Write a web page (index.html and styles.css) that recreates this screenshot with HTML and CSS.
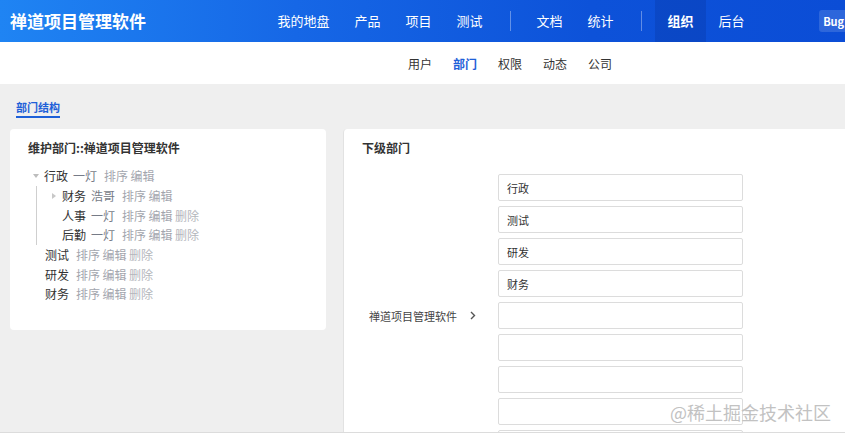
FILE: index.html
```html
<!DOCTYPE html>
<html lang="zh-CN">
<head>
<meta charset="utf-8">
<title>部门结构</title>
<link rel="stylesheet" href="styles.css">
</head>
<body>
<header class="topbar">
  <div class="brand">禅道项目管理软件</div>
  <nav class="mainnav">
    <a class="nav-item">我的地盘</a>
    <a class="nav-item">产品</a>
    <a class="nav-item">项目</a>
    <a class="nav-item">测试</a>
    <span class="nav-sep"></span>
    <a class="nav-item">文档</a>
    <a class="nav-item">统计</a>
    <span class="nav-sep"></span>
    <a class="nav-item active">组织</a>
    <a class="nav-item">后台</a>
  </nav>
  <span class="bug-badge">Bug</span>
</header>

<nav class="subnav">
  <a class="sub-item">用户</a>
  <a class="sub-item active">部门</a>
  <a class="sub-item">权限</a>
  <a class="sub-item">动态</a>
  <a class="sub-item">公司</a>
</nav>

<main class="content">
  <div class="tabs"><span class="tab active">部门结构</span></div>
  <div class="panels">
    <section class="panel panel-tree">
      <h2 class="panel-title">维护部门::禅道项目管理软件</h2>
      <ul class="tree">
        <li class="node">
          <div class="row"><span class="caret caret-down"></span><span class="name">行政</span><span class="manager">一灯</span><span class="actions"><a>排序</a><a>编辑</a></span></div>
          <ul class="children">
            <li class="node"><div class="row"><span class="caret caret-right"></span><span class="name">财务</span><span class="manager">浩哥</span><span class="actions"><a>排序</a><a>编辑</a></span></div></li>
            <li class="node"><div class="row"><span class="caret caret-leaf"></span><span class="name">人事</span><span class="manager">一灯</span><span class="actions"><a>排序</a><a>编辑</a><a class="del">删除</a></span></div></li>
            <li class="node"><div class="row"><span class="caret caret-leaf"></span><span class="name">后勤</span><span class="manager">一灯</span><span class="actions"><a>排序</a><a>编辑</a><a class="del">删除</a></span></div></li>
          </ul>
        </li>
        <li class="node"><div class="row"><span class="caret caret-none"></span><span class="name">测试</span><span class="actions"><a>排序</a><a>编辑</a><a class="del">删除</a></span></div></li>
        <li class="node"><div class="row"><span class="caret caret-none"></span><span class="name">研发</span><span class="actions"><a>排序</a><a>编辑</a><a class="del">删除</a></span></div></li>
        <li class="node"><div class="row"><span class="caret caret-none"></span><span class="name">财务</span><span class="actions"><a>排序</a><a>编辑</a><a class="del">删除</a></span></div></li>
      </ul>
    </section>

    <section class="panel panel-children">
      <h2 class="panel-title">下级部门</h2>
      <div class="child-form">
        <div class="parent-label">禅道项目管理软件
          <svg class="chev" width="6" height="9" viewBox="0 0 6 9"><polyline points="1,1 4.5,4.5 1,8" fill="none" stroke="#555" stroke-width="1.4"/></svg>
        </div>
        <div class="inputs">
          <input class="dept-input" type="text" value="行政" readonly>
          <input class="dept-input" type="text" value="测试" readonly>
          <input class="dept-input" type="text" value="研发" readonly>
          <input class="dept-input" type="text" value="财务" readonly>
          <input class="dept-input" type="text" value="" readonly>
          <input class="dept-input" type="text" value="" readonly>
          <input class="dept-input" type="text" value="" readonly>
          <input class="dept-input" type="text" value="" readonly>
          <input class="dept-input" type="text" value="" readonly>
        </div>
      </div>
    </section>
  </div>
</main>

<div class="watermark">@稀土掘金技术社区</div>
</body>
</html>
```

FILE: styles.css
```css
html, body {
  margin: 0;
  padding: 0;
  overflow: hidden;
}
body {
  position: relative;
  width: 845px;
  height: 442px;
  background: #fff;
  font-family: "Noto Sans CJK SC", "Noto Sans", sans-serif;
  color: #333;
}
a { cursor: pointer; }
ul { list-style: none; margin: 0; padding: 0; }
h2 { margin: 0; }

/* top bar */
.topbar {
  display: flex;
  align-items: stretch;
  height: 42px;
  background: linear-gradient(90deg, #1f84f3 0%, #1667e6 35%, #0d52d9 70%, #0b4dd6 100%);
  color: #fff;
  overflow: hidden;
}
.brand {
  flex: 0 0 auto;
  width: 255px;
  padding-left: 10px;
  font-size: 17px;
  font-weight: bold;
  line-height: 42px;
}
.mainnav {
  display: flex;
  align-items: stretch;
  flex: 0 0 auto;
}
.nav-item {
  padding: 0 12.5px;
  font-size: 13px;
  line-height: 42px;
  color: #fff;
}
.nav-item.active {
  background: rgba(0, 20, 90, 0.14);
  font-weight: bold;
}
.nav-sep {
  align-self: center;
  width: 1px;
  height: 20px;
  margin: 0 13px 0 15px;
  background: rgba(255, 255, 255, 0.35);
}
.bug-badge {
  flex: 0 0 auto;
  align-self: center;
  margin-left: 62px;
  height: 22px;
  padding: 0 4px;
  border-radius: 3px;
  background: rgba(255, 255, 255, 0.14);
  font-size: 11px;
  font-weight: bold;
  line-height: 22px;
}

/* sub nav */
.subnav {
  display: flex;
  align-items: center;
  gap: 21px;
  height: 42px;
  padding-left: 408px;
  font-size: 12px;
}
.sub-item { color: #333; }
.sub-item.active { color: #1e60d8; font-weight: bold; }

/* content */
.content {
  height: 348px;
  background: #efefef;
  border-bottom: 1px solid #dcdcdc;
  overflow: hidden;
}
.tabs {
  padding: 16px 0 0 16px;
  display: flex;
}
.tab {
  font-size: 11px;
  line-height: 14px;
  font-weight: bold;
  padding-bottom: 2px;
  color: #1e60d8;
  border-bottom: 2px solid #1e60d8;
}
.panels {
  display: flex;
  align-items: flex-start;
  gap: 17px;
  margin-top: 11px;
  padding-left: 10px;
}
.panel {
  background: #fff;
  border-radius: 4px;
  box-sizing: border-box;
}
.panel-title {
  font-size: 12px;
  line-height: 14px;
  font-weight: bold;
  color: #333;
}
.panel-tree {
  width: 316px;
  padding: 12px 18px 26px;
}
.panel-children {
  flex: 1;
  padding: 12px 18px 20px;
  border-left: 1px solid #e2e2e2;
  border-radius: 4px 0 0 4px;
}

/* tree */
.tree {
  margin: 11px 0 0 5px;
}
.row {
  display: flex;
  align-items: center;
  height: 19.7px;
  font-size: 12px;
  white-space: nowrap;
}
.caret {
  flex: 0 0 auto;
  width: 0;
  height: 0;
}
.caret-down {
  border-left: 3.5px solid transparent;
  border-right: 3.5px solid transparent;
  border-top: 4px solid #bdbdbd;
  margin-right: 5px;
}
.caret-none {
  width: 7px;
  margin-right: 5px;
}
.caret-right {
  border-top: 3.5px solid transparent;
  border-bottom: 3.5px solid transparent;
  border-left: 4px solid #c8c8c8;
  margin-right: 6px;
}
.caret-leaf {
  width: 4px;
  margin-right: 6px;
}
.children {
  margin-left: 3px;
  padding-left: 15px;
  border-left: 1px solid #cfcfcf;
}
.name { color: #333; }
.manager {
  margin-left: 5px;
  color: #767b87;
}
.actions {
  margin-left: 7px;
  display: flex;
  gap: 2.5px;
  color: #a3a6ae;
}
.actions .del { color: #b4b6bc; }

/* child form */
.child-form {
  display: flex;
  align-items: center;
  margin-top: 19px;
}
.parent-label {
  flex: 0 0 auto;
  width: 136px;
  box-sizing: border-box;
  padding-left: 7px;
  display: flex;
  align-items: center;
  font-size: 11px;
  color: #444;
}
.chev { margin-left: 13px; }
.inputs {
  display: flex;
  flex-direction: column;
  gap: 5px;
  width: 245px;
}
.dept-input {
  box-sizing: border-box;
  width: 245px;
  height: 27px;
  margin: 0;
  padding: 0 8px;
  border: 1px solid #dcdcdc;
  border-radius: 2px;
  background: #fff;
  font-family: "Noto Sans CJK SC", "Noto Sans", sans-serif;
  font-size: 11px;
  color: #333;
  outline: none;
}

.watermark {
  position: absolute;
  right: 14px;
  top: 401px;
  font-size: 18px;
  line-height: 22px;
  color: #c2c2c2;
  white-space: nowrap;
}
```
